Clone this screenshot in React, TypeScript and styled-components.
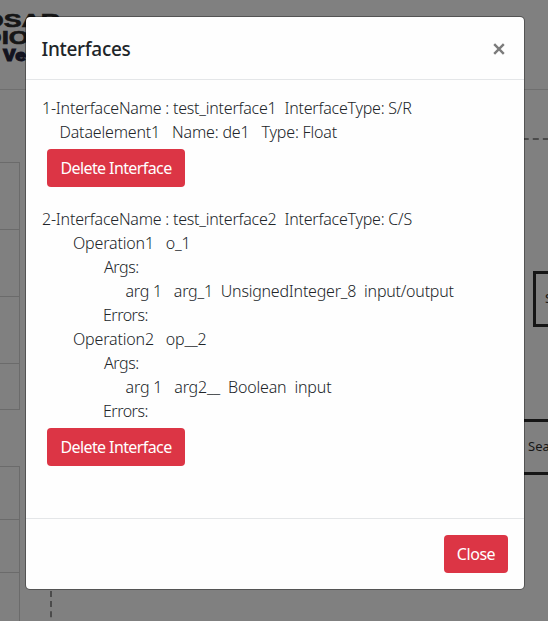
import React from "react";
import styled, { createGlobalStyle } from "styled-components";

const GlobalStyle = createGlobalStyle`
  *, *::before, *::after { box-sizing: border-box; }
  body {
    margin: 0;
    overflow: hidden;
    background: #808080;
    color: #212529;
    font: 300 16px/24px "Noto Sans", "Open Sans", sans-serif;
  }
`;

const Screen = styled.div`
  position: relative;
  width: 548px;
  height: 621px;
  overflow: hidden;
  background: #808080;
`;

const Page = styled.div`
  display: flex;
  flex-direction: column;
  height: 100%;
`;

const Banner = styled.header`
  flex: none;
  height: 90px;
  border-bottom: 1px solid #6f6f6f;
`;

const Logo = styled.svg`
  display: block;
`;

const Workspace = styled.main`
  position: relative;
  display: flex;
  flex: none;
  height: 531px;
`;

const Sidebar = styled.aside`
  display: flex;
  flex: none;
  flex-direction: column;
  gap: 56px;
  width: 20px;
  padding-top: 72px;
`;

const Panel = styled.div`
  flex: none;
  border: solid #6b6b6b;
  border-width: 1px 1px 0 0;
`;

const PanelRow = styled.div<{ $height: number }>`
  height: ${(p) => p.$height}px;
  border-bottom: 1px solid #6b6b6b;
`;

const Canvas = styled.div`
  width: 700px;
  height: 600px;
  flex: none;
  margin: 48px 0 0 30px;
  border: 2px dashed #4b4b4b;
`;

const DiagramNode = styled.div<{ $x: number; $y: number; $pad: number }>`
  position: absolute;
  left: ${(p) => p.$x}px;
  top: ${(p) => p.$y}px;
  width: 120px;
  height: 56px;
  padding-left: ${(p) => p.$pad}px;
  border: 3px solid #151515;
  color: #161616;
  font-size: 13px;
  font-weight: 400;
  line-height: 49px;
`;

const Overlay = styled.div`
  position: absolute;
  inset: 0;
  display: flex;
  align-items: flex-start;
  padding: 16px 0 0 25px;
`;

const Dialog = styled.section`
  display: flex;
  flex-direction: column;
  width: 500px;
  height: 574px;
  border: 1px solid rgba(0, 0, 0, 0.34);
  border-radius: 5px;
  background: #fefefe;
  background-clip: padding-box;
`;

const DialogHeader = styled.div`
  display: flex;
  justify-content: space-between;
  height: 63px;
  padding: 16px 16px 0 15.5px;
  border-bottom: 1px solid #e4e6e8;
`;

const Title = styled.h5`
  margin: 0;
  font-size: 19px;
  font-weight: 500;
  line-height: 32px;
  letter-spacing: -0.3px;
`;

const Dismiss = styled.button`
  display: flex;
  width: 18px;
  height: 31px;
  padding: 0;
  align-items: center;
  justify-content: center;
  border: 0;
  background: none;
  color: #7b7b7b;
`;

const DialogBody = styled.div`
  display: flex;
  flex: 1;
  flex-direction: column;
  gap: 15px;
  padding: 16px 16px 0;
`;

const DialogFooter = styled.div`
  display: flex;
  justify-content: flex-end;
  height: 71px;
  padding: 16px 16px 0;
  border-top: 1px solid #e4e6e8;
`;

const Entry = styled.div`
  display: flex;
  flex-direction: column;
  align-items: flex-start;
`;

const Line = styled.div<{ $indent?: number; $spacing?: number }>`
  padding-left: ${(p) => p.$indent ?? 0}px;
  white-space: pre;
  letter-spacing: ${(p) => p.$spacing ?? -0.22}px;
`;

const DangerButton = styled.button<{ $width: number; $inset?: number }>`
  width: ${(p) => p.$width}px;
  height: 38px;
  margin: ${(p) => p.$inset ?? 0}px;
  padding: 0;
  border: 0;
  border-radius: 4px;
  background: #dc3545;
  color: #fff;
  font: 400 16px/38px "Noto Sans", "Open Sans", sans-serif;
  letter-spacing: ${(p) => (p.$width > 100 ? -0.6 : -0.45)}px;
  white-space: nowrap;
`;

type TextLine = { text: string; indent?: number; spacing?: number };

const entries: TextLine[][] = [
  [
    { text: "1-InterfaceName : test_interface1  InterfaceType: S/R" },
    { text: "Dataelement1   Name: de1   Type: Float", indent: 17.5, spacing: -0.17 },
  ],
  [
    { text: "2-InterfaceName : test_interface2  InterfaceType: C/S" },
    { text: "Operation1   o_1", indent: 31, spacing: -0.17 },
    { text: "Args:", indent: 62, spacing: -0.4 },
    { text: "arg 1   arg_1  UnsignedInteger_8  input/output", indent: 83.5 },
    { text: "Errors:", indent: 61, spacing: -0.5 },
    { text: "Operation2   op__2", indent: 31, spacing: -0.17 },
    { text: "Args:", indent: 62, spacing: -0.4 },
    { text: "arg 1   arg2__  Boolean  input", indent: 83.5, spacing: -0.17 },
    { text: "Errors:", indent: 61, spacing: -0.5 },
  ],
];

export default function App() {
  return (
    <Screen>
      <GlobalStyle />
      <Page>
        <Banner>
          <Logo width="60" height="70" viewBox="0 0 60 70" fill="#161616">
            <g fontFamily="Liberation Sans" fontWeight="700" fontSize="18" stroke="#161616" strokeWidth="0.6">
              <text x="-17" y="26.5" textLength="77" lengthAdjust="spacingAndGlyphs">OSAR</text>
              <text x="-17" y="43.5" textLength="46" lengthAdjust="spacingAndGlyphs">DIO</text>
            </g>
            <text x="3" y="61" textLength="30" lengthAdjust="spacingAndGlyphs" fontFamily="Roboto" fontWeight="900" fontSize="16" fill="#13131f" stroke="#13131f" strokeWidth="0.9">Ver</text>
          </Logo>
        </Banner>
        <Workspace>
          <Sidebar>
            <Panel>
              <PanelRow $height={67} />
              <PanelRow $height={67} />
              <PanelRow $height={67} />
              <PanelRow $height={46} />
            </Panel>
            <Panel>
              <PanelRow $height={53} />
              <PanelRow $height={53} />
              <PanelRow $height={60} />
            </Panel>
          </Sidebar>
          <Canvas />
          <DiagramNode $x={533} $y={181} $pad={9}>Sensor</DiagramNode>
          <DiagramNode $x={500} $y={329} $pad={25}>Search</DiagramNode>
        </Workspace>
      </Page>
      <Overlay>
        <Dialog>
          <DialogHeader>
            <Title>Interfaces</Title>
            <Dismiss aria-label="Close">
              <svg width="12" height="12" viewBox="0 0 12 12" stroke="currentColor" strokeWidth="2.4">
                <path d="M1.2 1.2L10.8 10.8M10.8 1.2L1.2 10.8" />
              </svg>
            </Dismiss>
          </DialogHeader>
          <DialogBody>
            {entries.map((lines, i) => (
              <Entry key={i}>
                {lines.map((line, j) => (
                  <Line key={j} $indent={line.indent} $spacing={line.spacing}>
                    {line.text}
                  </Line>
                ))}
                <DangerButton $width={138} $inset={5}>Delete Interface</DangerButton>
              </Entry>
            ))}
          </DialogBody>
          <DialogFooter>
            <DangerButton $width={64}>Close</DangerButton>
          </DialogFooter>
        </Dialog>
      </Overlay>
    </Screen>
  );
}
